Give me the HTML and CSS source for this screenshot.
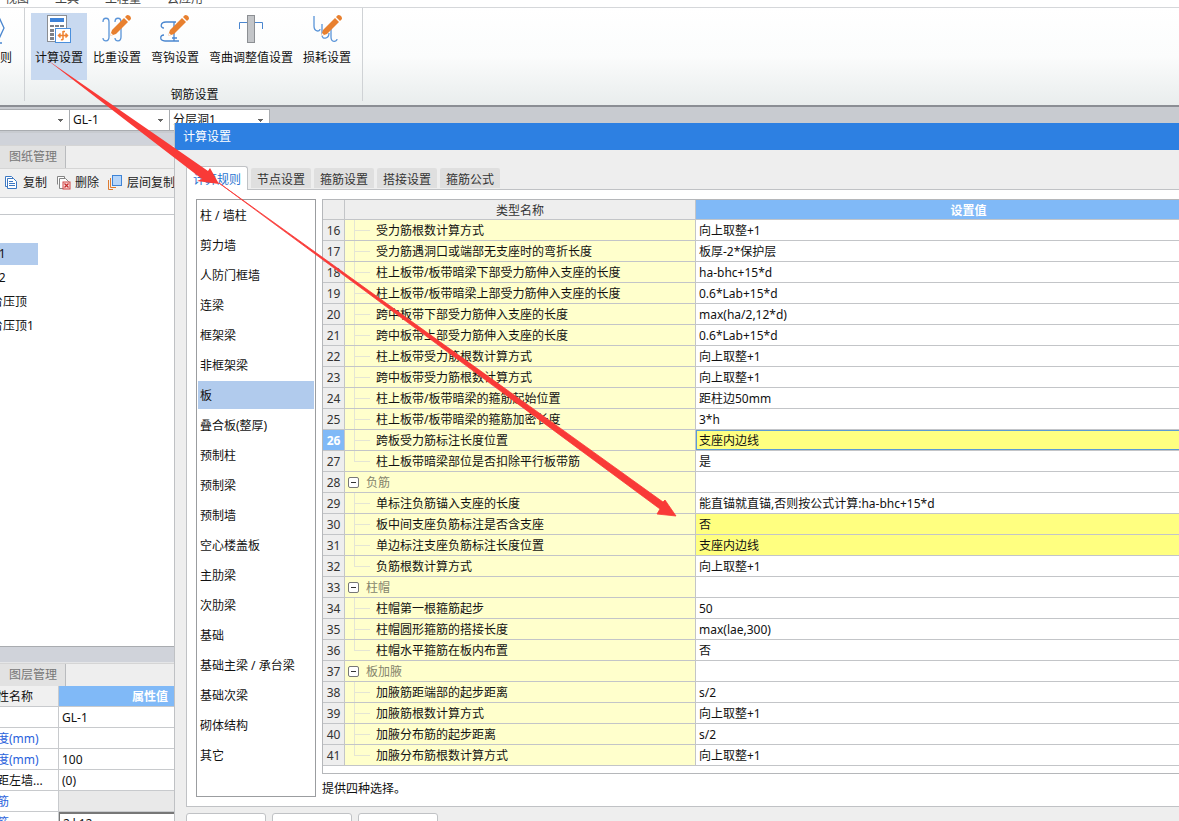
FILE: index.html
```html
<!DOCTYPE html>
<html lang="zh-CN">
<head>
<meta charset="utf-8">
<title>计算设置</title>
<link rel="stylesheet" href="styles.css">
</head>
<body>
<nav class="menu"><a href="#">视图</a><a href="#">工具</a><a href="#">工程量</a><a href="#">云应用</a></nav>

<header class="ribbon">
  <div class="ribbon-prev">
    <button class="tool"><svg width="32" height="32" viewBox="0 0 32 32" fill="none" stroke="#4a86cf" stroke-width="1.3"><path d="M8 2H14L20 15L14 28H8"/><path d="M10 30H18"/></svg><span>规则</span></button>
  </div>
  <section class="ribbon-group">
    <div class="tools">
      <button class="tool active"><svg width="32" height="32" viewBox="0 0 32 32"><rect x="4.500" y="2.500" width="19" height="26" fill="#fff" stroke="#8a8d92"/><rect x="7" y="5" width="14" height="4" fill="#3d82d8"/><path d="M7 12h4v2H7zM12 12h4v2h-4zM17 12h4v2h-4zM7 16h4v3H7zM7 20h4v3H7zM7 24h4v3H7z" fill="#7d8187"/><rect x="12.500" y="15.500" width="15" height="14" fill="#fff" stroke="#4a8fdc"/><path d="M20 18V26C20 27 19 27 18 26.500M15.500 22.500H24.500M17.500 20.500L15.500 22.500L17.500 24.500M22.500 20.500L24.500 22.500L22.500 24.500M20 18.500H22" fill="none" stroke="#ef8232" stroke-width="1.500"/></svg><span>计算设置</span></button>
      <button class="tool"><svg width="32" height="32" viewBox="0 0 32 32"><path d="M2 9C2 4 8 4 8 9V24C8 29 2 29 2 25M14 9C14 4 20 4 20 9V24C20 29 14 29 14 25" fill="none" stroke="#5a94d8" stroke-width="1.300"/><path d="M9 23L11 17L23 5L27 9L15 21Z" fill="#e8802f"/><path d="M24 4L26 2Q30 2 30 6L28 8Z" fill="#e8802f"/><path d="M9 23L10 20L12 22Z" fill="#fff"/></svg><span>比重设置</span></button>
      <button class="tool"><svg width="32" height="32" viewBox="0 0 32 32"><path d="M17 9H7C1 9 1 15 5 15M20 28H6C0 28 1 22 5 22M15 9V28M13 25H18" fill="none" stroke="#4a86cf" stroke-width="1.300"/><path d="M9 23L11 17L23 5L27 9L15 21Z" fill="#e8802f"/><path d="M24 4L26 2Q30 2 30 6L28 8Z" fill="#e8802f"/><path d="M9 23L10 20L12 22Z" fill="#fff"/></svg><span>弯钩设置</span></button>
      <button class="tool"><svg width="32" height="32" viewBox="0 0 32 32"><rect x="12.500" y="2.500" width="7" height="27" fill="#c3c5c8" stroke="#8c8f93"/><path d="M4.500 16V9.500H12M20 9.500H27.500V16" fill="none" stroke="#4a86cf"/></svg><span>弯曲调整值设置</span></button>
      <button class="tool"><svg width="32" height="32" viewBox="0 0 32 32"><path d="M3 3V13C3 19 9 19 9 16M11 11V22C11 27 18 26 18 20M20 16V24C20 30 26 29 26 26" fill="none" stroke="#5a94d8" stroke-width="1.300"/><path d="M10 23L12 17L24 5L28 9L16 21Z" fill="#e8802f"/><path d="M25 4L27 2Q31 2 31 6L29 8Z" fill="#e8802f"/><path d="M10 23L11 20L13 22Z" fill="#fff"/></svg><span>损耗设置</span></button>
    </div>
    <div class="group-name">钢筋设置</div>
  </section>
</header>

<div class="combos">
  <select class="combo first" aria-label="类型"><option></option></select>
  <select class="combo" aria-label="构件"><option>GL-1</option></select>
  <select class="combo" aria-label="分层"><option>分层洞1</option></select>
</div>

<aside class="side">
  <section class="drawings">
    <div class="side-tabs"><button class="side-tab">图纸管理</button></div>
    <div class="side-tools">
      <button><svg width="16" height="16" viewBox="0 0 16 16" fill="#fff" stroke="#3d78c2"><path d="M1.500 1.500H7.500L9.500 3.500V11.500H1.500Z"/><path d="M3.500 3.500H9.500L12.500 6.500V13.500H3.500ZM5 6.500H9M5 8.500H11M5 10.500H11"/></svg>复制</button>
      <button><svg width="16" height="16" viewBox="0 0 16 16" fill="#fff" stroke="#858585"><path d="M1.500 9.500V1.500H8.500V3"/><path d="M3.500 13.500V3.500H9.500L12.500 6.500V13.500Z"/><rect x="7" y="7" width="7" height="7" fill="#f8dede" stroke="#d24444"/><path d="M8.500 8.500L12.500 12.500M12.500 8.500L8.500 12.500" stroke="#c62f2f" stroke-width="1.300"/></svg>删除</button>
      <button><svg width="16" height="16" viewBox="0 0 16 16" fill="none"><path d="M0.500 5V14.500H5" stroke="#dd7b31"/><path d="M2.500 3V12.500H8" stroke="#dd7b31"/><rect x="4.500" y="0.500" width="9" height="10" fill="#b7d6fa" stroke="#3f84d6"/></svg>层间复制</button>
    </div>
    <input class="search" type="text" aria-label="搜索">
    <ul class="tree"><li class="selected"><span>-1</span></li><li><span>-2</span></li><li>台压顶</li><li>台压顶1</li></ul>
  </section>
  <section class="layers">
    <div class="side-tabs"><button class="side-tab">图层管理</button></div>
    <table class="props">
      <thead><tr><th>性名称</th><th class="value-head">属性值</th></tr></thead>
      <tbody>
        <tr><td></td><td>GL-1</td></tr>
        <tr><td class="link">度(mm)</td><td></td></tr>
        <tr><td class="link">度(mm)</td><td>100</td></tr>
        <tr><td>距左墙...</td><td>(0)</td></tr>
        <tr><td class="link">筋</td><td class="disabled"></td></tr>
        <tr><td class="link">筋</td><td class="editing">2ф12</td></tr>
      </tbody>
    </table>
  </section>
</aside>

<main class="dialog" role="dialog" aria-labelledby="dialog-title">
  <h1 class="dialog-title" id="dialog-title">计算设置</h1>
  <div class="tabs" role="tablist">
    <button class="tab current" role="tab">计算规则</button><button class="tab" role="tab">节点设置</button><button class="tab" role="tab">箍筋设置</button><button class="tab" role="tab">搭接设置</button><button class="tab" role="tab">箍筋公式</button>
  </div>
  <div class="panel">
    <ul class="kinds">
      <li><button>柱 / 墙柱</button></li><li><button>剪力墙</button></li><li><button>人防门框墙</button></li><li><button>连梁</button></li><li><button>框架梁</button></li><li><button>非框架梁</button></li><li><button class="chosen">板</button></li><li><button>叠合板(整厚)</button></li><li><button>预制柱</button></li><li><button>预制梁</button></li><li><button>预制墙</button></li><li><button>空心楼盖板</button></li><li><button>主肋梁</button></li><li><button>次肋梁</button></li><li><button>基础</button></li><li><button>基础主梁 / 承台梁</button></li><li><button>基础次梁</button></li><li><button>砌体结构</button></li><li><button>其它</button></li>
    </ul>
    <div class="detail">
      <div class="grid-box">
      <table class="grid">
        <thead><tr><th class="num"></th><th class="name">类型名称</th><th class="value-head">设置值</th></tr></thead>
        <tbody>
          <tr><th>16</th><td>受力筋根数计算方式</td><td>向上取整+1</td></tr>
          <tr><th>17</th><td>受力筋遇洞口或端部无支座时的弯折长度</td><td>板厚-2*保护层</td></tr>
          <tr><th>18</th><td>柱上板带/板带暗梁下部受力筋伸入支座的长度</td><td>ha-bhc+15*d</td></tr>
          <tr><th>19</th><td>柱上板带/板带暗梁上部受力筋伸入支座的长度</td><td>0.6*Lab+15*d</td></tr>
          <tr><th>20</th><td>跨中板带下部受力筋伸入支座的长度</td><td>max(ha/2,12*d)</td></tr>
          <tr><th>21</th><td>跨中板带上部受力筋伸入支座的长度</td><td>0.6*Lab+15*d</td></tr>
          <tr><th>22</th><td>柱上板带受力筋根数计算方式</td><td>向上取整+1</td></tr>
          <tr><th>23</th><td>跨中板带受力筋根数计算方式</td><td>向上取整+1</td></tr>
          <tr><th>24</th><td>柱上板带/板带暗梁的箍筋起始位置</td><td>距柱边50mm</td></tr>
          <tr><th>25</th><td>柱上板带/板带暗梁的箍筋加密长度</td><td>3*h</td></tr>
          <tr class="focus changed"><th>26</th><td>跨板受力筋标注长度位置</td><td>支座内边线</td></tr>
          <tr class="last"><th>27</th><td>柱上板带暗梁部位是否扣除平行板带筋</td><td>是</td></tr>
          <tr class="group"><th>28</th><td><button aria-label="折叠"></button>负筋</td><td></td></tr>
          <tr><th>29</th><td>单标注负筋锚入支座的长度</td><td>能直锚就直锚,否则按公式计算:ha-bhc+15*d</td></tr>
          <tr class="changed"><th>30</th><td>板中间支座负筋标注是否含支座</td><td>否</td></tr>
          <tr class="changed"><th>31</th><td>单边标注支座负筋标注长度位置</td><td>支座内边线</td></tr>
          <tr class="last"><th>32</th><td>负筋根数计算方式</td><td>向上取整+1</td></tr>
          <tr class="group"><th>33</th><td><button aria-label="折叠"></button>柱帽</td><td></td></tr>
          <tr><th>34</th><td>柱帽第一根箍筋起步</td><td>50</td></tr>
          <tr><th>35</th><td>柱帽圆形箍筋的搭接长度</td><td>max(lae,300)</td></tr>
          <tr class="last"><th>36</th><td>柱帽水平箍筋在板内布置</td><td>否</td></tr>
          <tr class="group"><th>37</th><td><button aria-label="折叠"></button>板加腋</td><td></td></tr>
          <tr><th>38</th><td>加腋筋距端部的起步距离</td><td>s/2</td></tr>
          <tr><th>39</th><td>加腋筋根数计算方式</td><td>向上取整+1</td></tr>
          <tr><th>40</th><td>加腋分布筋的起步距离</td><td>s/2</td></tr>
          <tr class="last"><th>41</th><td>加腋分布筋根数计算方式</td><td>向上取整+1</td></tr>
        </tbody>
      </table>
      </div>
      <p class="hint">提供四种选择。</p>
    </div>
  </div>
  <footer class="actions"><button aria-label="导入"></button><button aria-label="导出"></button><button aria-label="恢复"></button></footer>
</main>

<svg class="arrows" width="1179" height="821" viewBox="0 0 1179 821" fill="#f93a37"><path stroke="#f93a37" stroke-width="0.8" d="M219 183L663 502L665 500L676 516L657 514L660 509Z"/><path d="M46 59L208 171L210 168L219 184L197 181L202 179Z"/></svg>
</body>
</html>
```
FILE: styles.css
```css
* { box-sizing: border-box; }
body {
  margin: 0;
  height: 100vh;
  overflow: hidden;
  position: relative;
  display: flex;
  flex-direction: column;
  background: #d0d3da;
  color: #111;
  font: 12px/16px "Noto Sans", "Noto Sans CJK SC", sans-serif;
}
button, select, input { font: inherit; color: inherit; border-radius: 0; }
button { border: 0; padding: 0; background: none; white-space: nowrap; }
ul { list-style: none; margin: 0; padding: 0; }
svg { display: block; flex: none; }
table { border-collapse: separate; border-spacing: 0; table-layout: fixed; }

.menu {
  flex: none;
  height: 8px;
  display: flex;
  align-items: flex-end;
  gap: 26px;
  padding-left: 5px;
  overflow: hidden;
  background: #fff;
  border-bottom: 1px solid #d5d7da;
}
.menu a { color: #444; text-decoration: none; }

.ribbon {
  flex: none;
  height: 99px;
  display: flex;
  background: linear-gradient(#fff, #fbfcfc 50%, #e9eded);
  border-bottom: 2px solid #8b8e94;
}
.ribbon-prev {
  width: 25px;
  display: flex;
  justify-content: flex-end;
  overflow: hidden;
  padding: 5px 8px 0 0;
  border-right: 1px solid #cfd2d5;
  margin: 0 0 4px;
}
.ribbon-prev .tool { padding: 0; }
.ribbon-group {
  display: flex;
  flex-direction: column;
  padding: 5px 7px 0 6px;
  border-right: 1px solid #cfd2d5;
  margin-bottom: 4px;
}
.tools { display: flex; gap: 2px; }
.tool {
  flex: none;
  height: 67px;
  padding: 0 4px;
  display: flex;
  flex-direction: column;
  align-items: center;
  gap: 5px;
}
.tool.active { background: #c8d9f0; }
.group-name { text-align: center; padding: 7px 0 0 3px; }

.combos {
  flex: none;
  height: 26px;
  display: flex;
  background: #c8cbd0;
  padding-top: 2px;
}
.combo {
  width: 100px;
  height: 22px;
  padding: 0 3px;
  border: 1px solid #a9acb0;
  border-left-width: 0;
  appearance: none;
  background:
    linear-gradient(#666, #666) right 6px top 9px / 5px 1px no-repeat,
    linear-gradient(#666, #666) right 7px top 10px / 3px 1px no-repeat,
    linear-gradient(#666, #666) right 8px top 11px / 1px 1px no-repeat,
    #fff;
}
.combo.first { width: 70px; }

.side {
  flex: 1;
  min-height: 0;
  width: 175px;
  display: flex;
  flex-direction: column;
  gap: 5px;
  padding-top: 12px;
}
.drawings {
  flex: none;
  height: 502px;
  display: flex;
  flex-direction: column;
  background: #fff;
  border-bottom: 1px solid #a9acb0;
}
.layers { border-top: 1px solid #e5e6e8; margin-top: 10px; }
.side-tabs { display: flex; height: 23px; background: #eee; border-top: 1px solid #d5d5d5; }
.side-tab {
  padding: 0 8px 0 9px;
  color: #777;
  background: #e2e2e2;
  border-right: 1px solid #b9bbbe;
}
.side-tools {
  display: flex;
  gap: 9px;
  height: 29px;
  padding-left: 4px;
  overflow: hidden;
  background: #f0f0f0;
  border-top: 1px solid #d5d5d5;
  color: #222;
}
.side-tools button { display: flex; align-items: center; gap: 3px; flex: none; }
.search { width: 100%; height: 18px; border: 0; border-top: 1px solid #d0d2d5; border-bottom: 1px solid #c4c7cb; }
.tree { padding-top: 28px; overflow: hidden; }
.tree li { height: 24px; line-height: 22px; margin-left: -9px; }
.tree span { padding-left: 4px; }
.tree .selected { width: 47px; height: 22px; margin-bottom: 2px; background: #b1cbed; }

.props { width: 178px; margin-left: -3px; background: #fff; }
.props td, .props th {
  height: 21px;
  padding: 2px 0 0 3px;
  border-right: 1px solid #c8cacd;
  border-bottom: 1px solid #c8cacd;
  white-space: nowrap;
  line-height: 16px;
}
.props td:first-child, .props th:first-child { width: 62px; padding-left: 0; }
.props th { font-weight: 400; text-align: left; background: #f0f0f0; }
.props .value-head { text-align: right; padding-right: 6px; font-weight: 700; color: #fff; background: #80b9f7; }
.link { color: #2a62dc; }
.disabled { background: #e9e9e9; }
.props .editing { border-top: 2px solid #777; border-left: 1px solid #777; }

.dialog {
  position: absolute;
  left: 174px;
  right: -65px;
  top: 123px;
  bottom: 0;
  display: flex;
  flex-direction: column;
  overflow: hidden;
  background: #eee;
  border-left: 1px solid #bfc1c4;
}
.dialog-title {
  flex: none;
  padding: 0 8px;
  margin: 0;
  font-size: 12px;
  font-weight: 400;
  line-height: 27px;
  color: #fff;
  background: #2d80e2;
}
.tabs {
  flex: none;
  height: 40px;
  display: flex;
  align-items: flex-end;
  gap: 3px;
  margin-left: 11px;
  border-bottom: 1px solid #c0c2c5;
}
.tab {
  height: 20px;
  padding: 4px 6px 0;
  margin-bottom: 1px;
  color: #333;
  background: #dfdfdf;
  border-radius: 2px 2px 0 0;
}
.tab.current {
  height: 24px;
  padding-top: 2px;
  margin-bottom: -1px;
  color: #2a75d0;
  background: #fff;
  border: 1px solid #c0c2c5;
  border-bottom: 0;
  border-radius: 3px 3px 0 0;
}
.panel {
  flex: none;
  display: flex;
  gap: 6px;
  margin-left: 11px;
  padding: 9px 0 9px 9px;
  background: #fff;
  border: 1px solid #c0c2c5;
  border-top: 0;
}
.kinds { width: 120px; flex: none; border: 1px solid #9b9da0; padding: 1px; }
.kinds li { height: 30px; }
.kinds button { display: block; width: 100%; height: 28px; padding: 2px 0 0 2px; text-align: left; }
.kinds .chosen { background: #b1cbed; }
.detail { flex: 1; }
.grid-box { border: 1px solid #b5b7ba; height: 575px; }
.grid { width: 100%; }
.grid th, .grid td {
  height: 21px;
  padding: 2px 0 0 3px;
  border-right: 1px solid #c3c5c8;
  border-bottom: 1px solid #c3c5c8;
  line-height: 16px;
  white-space: nowrap;
  text-align: left;
}
.grid th { font-weight: 400; text-align: center; padding: 2px 0 0; background: #eee; color: #333; }
.grid thead th { height: 20px; }
.grid .num { width: 22px; }
.grid .name { width: 351px; }
.grid .value-head, .grid .focus th { background: #80b9f7; color: #fff; font-weight: 700; }
.grid td:nth-child(2) {
  padding-left: 31px;
  background:
    linear-gradient(#e4e5d4, #e4e5d4) 9px 0 / 1px 100% no-repeat,
    linear-gradient(#e4e5d4, #e4e5d4) 9px 10px / 16px 1px no-repeat,
    #ffffcc;
}
.grid .last td:nth-child(2) {
  background:
    linear-gradient(#e4e5d4, #e4e5d4) 9px 0 / 1px 10px no-repeat,
    linear-gradient(#e4e5d4, #e4e5d4) 9px 10px / 16px 1px no-repeat,
    #ffffcc;
}
.grid .group td:nth-child(2) { padding-left: 3px; background: #ffffcc; color: #85856d; }
.grid .group button {
  width: 11px;
  height: 11px;
  margin-right: 7px;
  border: 1px solid #777;
  border-radius: 2px;
  background: linear-gradient(#333, #333) center / 5px 1px no-repeat #fff;
  vertical-align: 0;
}
.grid .changed td:last-child { background: #ffff80; }
.grid .focus td:last-child { box-shadow: inset 0 0 0 1px #5b9bd5; }
.hint { margin: 7px 0 0; }
.actions { flex: none; display: flex; gap: 6px; margin: 6px 0 0 11px; }
.actions button { width: 80px; height: 28px; background: #fff; border: 1px solid #c0c2c5; border-radius: 3px; color: #333; }

.arrows { position: absolute; left: 0; top: 0; pointer-events: none; }
```
